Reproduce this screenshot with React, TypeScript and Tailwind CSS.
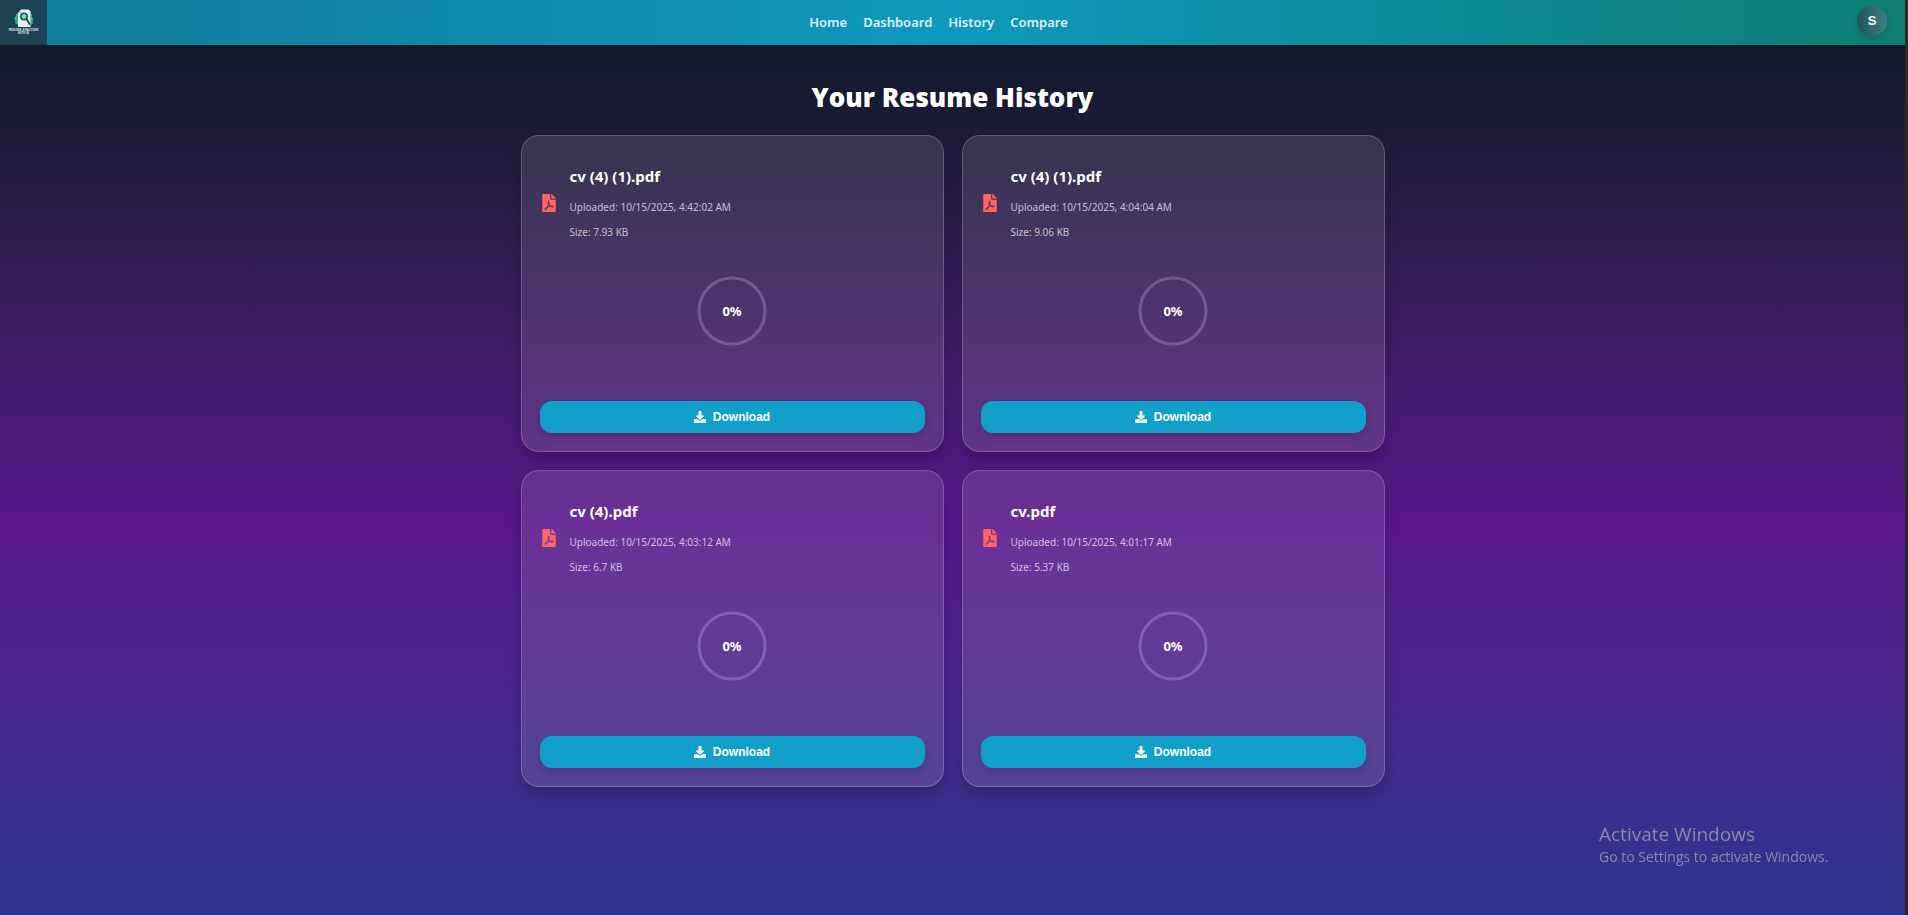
import { FaDownload, FaFilePdf } from "react-icons/fa";

type Resume = { name: string; uploaded: string; size: string; score: number };

const resumes: Resume[] = [
  { name: "cv (4) (1).pdf", uploaded: "10/15/2025, 4:42:02 AM", size: "7.93 KB", score: 0 },
  { name: "cv (4) (1).pdf", uploaded: "10/15/2025, 4:04:04 AM", size: "9.06 KB", score: 0 },
  { name: "cv (4).pdf", uploaded: "10/15/2025, 4:03:12 AM", size: "6.7 KB", score: 0 },
  { name: "cv.pdf", uploaded: "10/15/2025, 4:01:17 AM", size: "5.37 KB", score: 0 },
];

const links = ["Home", "Dashboard", "History", "Compare"];

function Logo() {
  return (
    <a href="#home" aria-label="Resume Analyzer" className="flex h-[45px] w-[47px] flex-col items-center gap-px bg-[#1d4254] pt-2">
      <svg viewBox="0 0 22 20" className="h-[20px] w-[22px]" aria-hidden="true">
        <path d="M6 5 3 6 2.500 8.500 1 10.500 2.500 13 2 15l3 2h3V5zM16 5l3 1.500v2.500l1.500 2-1 2 .5 2-2 2h-3V5z" fill="#22b48d" />
        <path d="M5 5 8 1.500h7.500l2 2V19H5z" fill="#e6f1ef" />
        <path d="M5 5h3V1.500z" fill="#9fc9c4" />
        <circle cx="11" cy="8.500" r="3.200" fill="#8fd0c2" stroke="#17545c" strokeWidth="1.500" />
        <path d="m13.500 11 3 5" stroke="#164250" strokeWidth="1.800" strokeLinecap="round" />
      </svg>
      <span className="text-center font-['Liberation_Sans',sans-serif] text-[3px] leading-[3px] font-bold whitespace-nowrap text-[#d5e0e3]">
        RESUME ANALYZER
        <br />
        WITH AI
      </span>
    </a>
  );
}

function ScoreRing({ score }: { score: number }) {
  const length = 2 * Math.PI * 33;
  return (
    <div className="grid size-[72px] place-items-center">
      <svg viewBox="0 0 72 72" className="col-start-1 row-start-1 size-[72px] -rotate-90" aria-hidden="true">
        <circle cx="36" cy="36" r="33" fill="none" stroke="white" strokeOpacity="0.2" strokeWidth="3" />
        {score > 0 && (
          <circle cx="36" cy="36" r="33" fill="none" stroke="#22d3ee" strokeWidth="3" strokeDasharray={`${(length * score) / 100} ${length}`} />
        )}
      </svg>
      <span className="col-start-1 row-start-1 text-[13px] leading-5 font-bold">{score}%</span>
    </div>
  );
}

function ResumeCard({ resume }: { resume: Resume }) {
  return (
    <article className="flex flex-col rounded-[18px] border border-white/20 bg-white/[0.11] px-[18px] pt-[29px] pb-[18px] shadow-[0_8px_14px_rgba(0,0,0,0.2)]">
      <div className="flex items-center gap-[14px] pl-0.5">
        <FaFilePdf className="mb-[3px] h-[18px] w-[14px] shrink-0 text-[#ff6467]" aria-hidden="true" />
        <div>
          <h2 className="text-[15px] leading-[22px] font-bold">{resume.name}</h2>
          <div className="mt-[9px] flex flex-col gap-0.5 text-[10px] leading-[23px] text-white/70">
            <p>Uploaded: {resume.uploaded}</p>
            <p>Size: {resume.size}</p>
          </div>
        </div>
      </div>
      <div className="mt-[31px] flex justify-center">
        <ScoreRing score={resume.score} />
      </div>
      <button
        type="button"
        className="mt-[54px] flex h-8 w-full cursor-pointer items-center justify-center gap-[7px] rounded-xl bg-[#129fca] font-['Liberation_Sans',sans-serif] text-[12px] font-bold shadow-[0_4px_8px_rgba(0,0,0,0.15)]"
      >
        <FaDownload className="size-3" aria-hidden="true" />
        Download
      </button>
    </article>
  );
}

export default function App() {
  return (
    <div className="min-h-screen border-r-[3px] border-[#29282b] bg-[#101828] font-['Noto_Sans',sans-serif] text-white">
      <header className="flex h-[45px] items-center justify-between bg-linear-to-r from-[#117b99] via-[#0f98bd] to-[#0f7e74]">
        <div className="flex flex-1">
          <Logo />
        </div>
        <nav className="mr-[10px] flex gap-4 text-[13px] font-semibold text-white/85">
          {links.map((link) => (
            <a key={link} href={`#${link.toLowerCase()}`}>
              {link}
            </a>
          ))}
        </nav>
        <div className="flex flex-1 justify-end pr-[18px]">
          <button
            type="button"
            aria-label="Account"
            className="mb-1 size-[30px] cursor-pointer rounded-full bg-linear-to-r from-[#21505f] to-[#3b8085] font-['Liberation_Sans',sans-serif] text-[13px] font-bold shadow-[0_4px_8px_rgba(0,0,0,0.15)]"
          >
            S
          </button>
        </div>
      </header>

      <main className="min-h-[calc(100vh-45px)] bg-linear-to-b from-[#101828] via-[#59168b] via-55% to-[#2b348c] px-6 pt-[34px] pb-[100px]">
        <h1 className="text-center font-['Open_Sans',sans-serif] text-[26px] leading-9 font-extrabold">Your Resume History</h1>
        <section aria-label="Resumes" className="mx-auto mt-5 grid max-w-[864px] gap-[18px] sm:grid-cols-2">
          {resumes.map((resume) => (
            <ResumeCard key={resume.uploaded} resume={resume} />
          ))}
        </section>
      </main>

      <aside className="pointer-events-none fixed right-[72px] bottom-12 w-[237px] font-['Open_Sans',sans-serif] whitespace-nowrap text-[#8c88a8]">
        <p className="text-[19px] leading-[26px]">Activate Windows</p>
        <p className="text-[14px] leading-5">Go to Settings to activate Windows.</p>
      </aside>
    </div>
  );
}
